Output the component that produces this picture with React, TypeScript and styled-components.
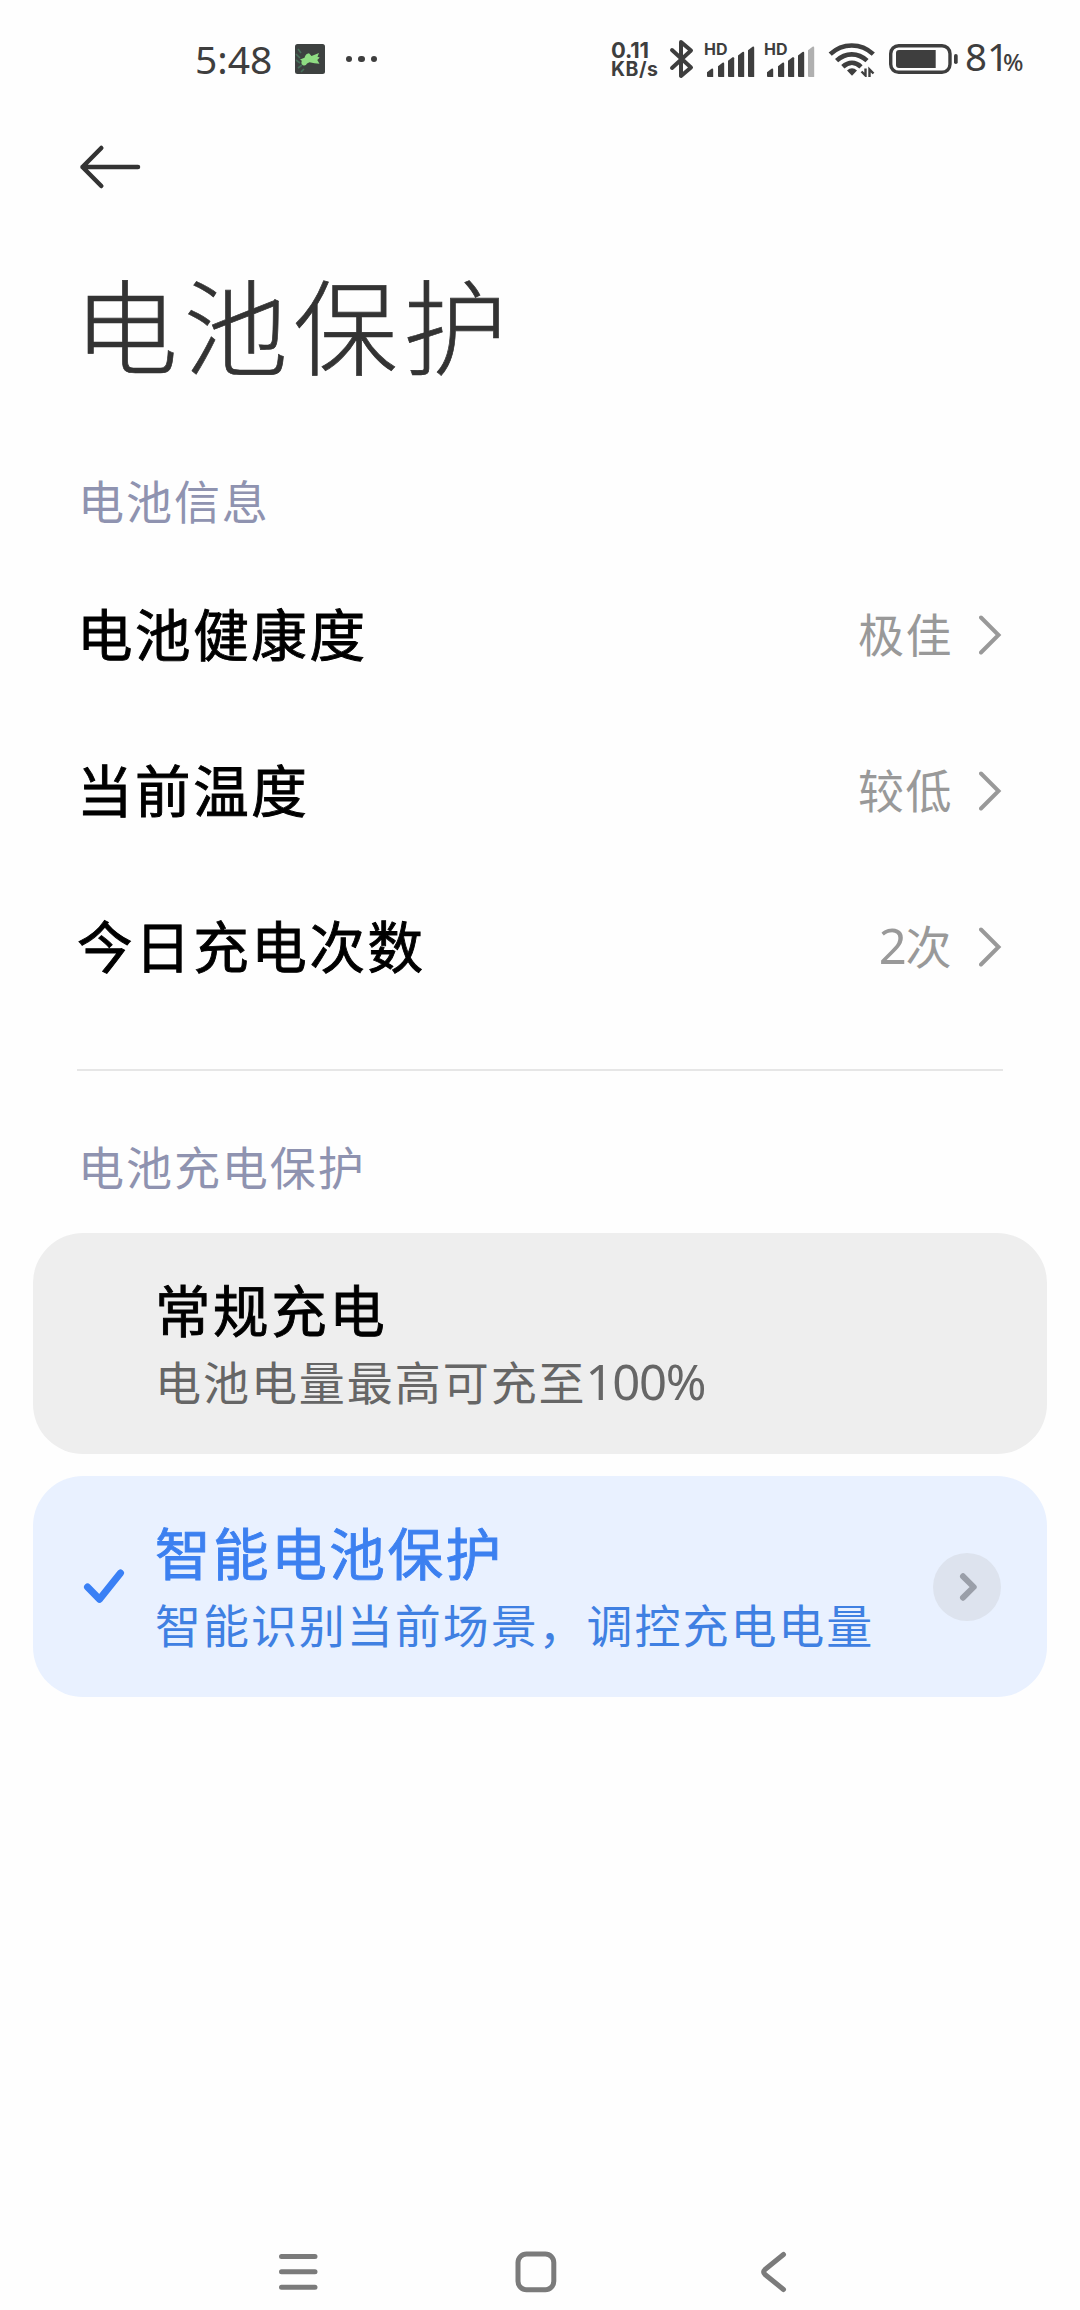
import React from 'react';
import styled, { createGlobalStyle } from 'styled-components';

const GlobalStyle = createGlobalStyle`
  * { box-sizing: border-box; }
  body { margin: 0; background: #fefefe; }
`;

const cjk = '"Noto Sans CJK SC", "Noto Sans", sans-serif';
const ink = '#3e3e3e';

const Screen = styled.div`
  display: flex;
  flex-direction: column;
  width: 1080px;
  height: 2310px;
  overflow: hidden;
  background: #fefefe;
  font-family: ${cjk};
`;

/* ---------- status bar ---------- */

const StatusBar = styled.header`
  display: flex;
  justify-content: space-between;
  align-items: center;
  height: 118px;
  padding: 0 54px 0 195px;
  color: ${ink};
  flex: none;
`;

const StatusGroup = styled.div`
  display: flex;
  align-items: center;
  height: 60px;
`;

const Clock = styled.span`
  width: 100px;
  padding-bottom: 1px;
  font: 400 39px/56px "Noto Sans", sans-serif;
`;

const Dots = styled.div`
  display: flex;
  gap: 6px;
  margin-left: 21px;
`;

const Dot = styled.i`
  width: 6.4px;
  height: 6.4px;
  border-radius: 50%;
  background: ${ink};
`;

const Speed = styled.div`
  display: flex;
  flex-direction: column;
  gap: 1px;
  width: 58px;
  padding-top: 1px;
  font-family: Inter, sans-serif;
  font-weight: 650;
  white-space: nowrap;
`;

const SpeedValue = styled.div`
  font-size: 22px;
  line-height: 17px;
  letter-spacing: -0.2px;
`;

const SpeedUnit = styled.div`
  font-size: 19.5px;
  line-height: 18px;
  letter-spacing: 0.5px;
`;

const Signals = styled.div`
  display: flex;
  gap: 10px;
  margin: 0 13px 0 10px;
`;

const Signal = styled.div`
  position: relative;
  display: flex;
  width: 50px;
  height: 34px;
`;

const SignalTag = styled.span`
  position: absolute;
  left: -1px;
  top: 0;
  font: 650 16px/14px Inter, sans-serif;
`;

const BatteryGauge = styled.div`
  display: flex;
  align-items: center;
  margin-left: 13px;
`;

const Percent = styled.div`
  display: flex;
  align-items: baseline;
  width: 61px;
  margin-left: 7px;
  font: 400 38.5px/56px "Noto Sans", sans-serif;
`;

const PercentSign = styled.span`
  font-size: 24px;
  font-weight: 500;
  margin-left: -6px;
`;

/* ---------- page ---------- */

const NavRow = styled.div`
  display: flex;
  align-items: center;
  height: 98px;
  padding-left: 78px;
`;

const Title = styled.h1`
  margin: 52px 0 88px 74px;
  font-size: 104px;
  font-weight: 300;
  line-height: 110px;
  letter-spacing: 5.7px;
  color: #333;
  -webkit-text-stroke: 0.7px #333;
`;

const SectionLabel = styled.h2`
  margin: 0 0 0 78px;
  font-size: 46px;
  font-weight: 400;
  line-height: 66px;
  letter-spacing: 1.95px;
  color: #8f93b0;
`;

const List = styled.div`
  margin: 25px 77px 0 77px;
`;

const Row = styled.div`
  display: flex;
  align-items: center;
  height: 156px;
`;

const RowName = styled.span`
  flex: 1;
  padding-bottom: 7px;
  font-size: 55.5px;
  font-weight: 400;
  line-height: 80px;
  letter-spacing: 2.6px;
  color: #000;
  -webkit-text-stroke: 0.9px #000;
`;

const RowValue = styled.span`
  padding-bottom: 7px;
  margin-right: 26px;
  font-size: 46px;
  line-height: 66px;
  letter-spacing: 1.5px;
  color: #999;
`;

const Digits = styled.span`
  font-family: "Noto Sans", sans-serif;
  font-size: 49px;
  line-height: 1;
  letter-spacing: -1.3px;
  margin-left: -1px;
`;

const Divider = styled.hr`
  width: 926px;
  height: 2px;
  margin: 44px 0 60.5px 77px;
  border: 0;
  background: #e6e6e6;
  flex: none;
`;

const Options = styled.div`
  display: flex;
  flex-direction: column;
  gap: 22px;
  margin: 35.5px 33px 0;
`;

const Option = styled.div<{ $active?: boolean }>`
  display: flex;
  align-items: center;
  height: 221px;
  padding-right: 46px;
  border-radius: 50px;
  background: ${(p) => (p.$active ? '#e9f1ff' : '#eeeeee')};
`;

const OptionMark = styled.div`
  width: 122px;
  padding: 3px 0 0 49px;
`;

const OptionBody = styled.div`
  flex: 1;
  padding-bottom: 2px;
  white-space: nowrap;
`;

const OptionName = styled.div<{ $active?: boolean }>`
  font-size: 55.5px;
  font-weight: 400;
  line-height: 70px;
  letter-spacing: 2.6px;
  color: ${(p) => (p.$active ? '#3c80f0' : '#000')};
  -webkit-text-stroke: 0.9px ${(p) => (p.$active ? '#3c80f0' : '#000')};
`;

const OptionNote = styled.div<{ $active?: boolean }>`
  margin-top: 4px;
  font-size: 46px;
  line-height: 66px;
  letter-spacing: 1.95px;
  color: ${(p) => (p.$active ? '#3f80e2' : '#666')};
`;

const DetailButton = styled.div`
  display: flex;
  align-items: center;
  justify-content: center;
  width: 68px;
  height: 68px;
  border-radius: 50%;
  background: #dde3ee;
`;

const SystemNav = styled.nav`
  display: flex;
  align-items: center;
  height: 76px;
  margin-top: auto;
  padding-left: 278px;
`;

const NavSlot = styled.div<{ $w: number }>`
  display: flex;
  width: ${(p) => p.$w}px;
`;

/* ---------- icons ---------- */

const AppBadge = () => (
  <svg width="30" height="30" viewBox="0 0 30 30">
    <rect width="30" height="30" rx="2.5" fill="#3d4140" />
    <path d="M1 10l4 4M1 16l4 3M3 24l4-3M6 28l3-3M3 5l3 4" stroke="#46705a" strokeWidth="1.6" />
    <path
      d="M5 15.500L9.500 13.800Q10.500 9.500 14 9.200L16.500 12 24 9 22.500 12.800 24.700 13.600 22.300 16 24.500 19.700 19.500 19.300 14.500 18.200 12 19.500Q11 22 8.500 21.500 5.500 20.500 6.800 16.800z"
      fill="#8fdc83"
    />
  </svg>
);

const Bluetooth = () => (
  <svg width="26" height="40" viewBox="0 0 26 40" fill="none" stroke={ink} strokeWidth="4" strokeLinecap="round" strokeLinejoin="round">
    <path d="M3 11L22 28.500 12 37V3l10 8.500L3 29" />
  </svg>
);

const bars = [
  { x: 2, y: 26.7 },
  { x: 13, y: 20.7 },
  { x: 23, y: 15.3 },
  { x: 33, y: 10 },
  { x: 43, y: 4.7 },
];

const SignalBars = ({ strength }: { strength: number }) => (
  <svg width="50" height="35" viewBox="0 0 50 35">
    {bars.map((b, i) => (
      <path
        key={b.x}
        d={`M${b.x} ${b.y + 3.5}L${b.x + 4.5} ${b.y}q1.700-.6 1.700 1V35H${b.x + 1}q-1 0-1-1z`}
        fill={i < strength ? ink : '#b0b0b0'}
      />
    ))}
  </svg>
);

const Wifi = () => (
  <svg width="48" height="36" viewBox="0 0 48 36" fill="none" stroke={ink} strokeWidth="4.6">
    <path d="M2.200 13.200C14.500 1.600 33 1.600 45.300 13.200" />
    <path d="M8.600 19.700C17.500 11.200 30 11.200 39 19.700" />
    <path d="M14.800 25.800C20.500 20.500 27.500 20.500 33 25.800" />
    <path d="M19 29.500q5-4.300 10 0L24 34.800z" fill={ink} stroke="none" />
    <path d="M37.500 27.500V34.500l-4-4M41.500 36V28.500l4 4" strokeWidth="2.400" />
  </svg>
);

const Battery = () => (
  <svg width="69" height="30" viewBox="0 0 69 30">
    <rect x="1.700" y="1.700" width="59.300" height="26.600" rx="8" fill="none" stroke={ink} strokeWidth="3.400" />
    <path d="M10 6h36.700v18H10q-3 0-3-3V9q0-3 3-3z" fill={ink} />
    <rect x="65" y="10" width="3.700" height="10" rx="1.800" fill={ink} />
  </svg>
);

const BackArrow = () => (
  <svg width="64" height="46" viewBox="0 0 64 46" fill="none" stroke="#333" strokeWidth="4.500" strokeLinecap="round" strokeLinejoin="round">
    <path d="M60 23H4.500M23.300 4L4.500 23l18.800 19" />
  </svg>
);

const RowChevron = () => (
  <svg width="24" height="40" viewBox="0 0 24 40" fill="none" stroke="#999" strokeWidth="4" strokeLinecap="round">
    <path d="M2 2.500L19.500 20 2 37.500" />
  </svg>
);

const Check = () => (
  <svg width="44" height="38" viewBox="0 0 44 38" fill="none" stroke="#3a80f5" strokeWidth="7" strokeLinecap="round" strokeLinejoin="round">
    <path d="M5.500 20L17.500 32.300 38.500 6" />
  </svg>
);

const DetailChevron = () => (
  <svg width="24" height="32" viewBox="0 0 24 32" fill="none" stroke="#9a9fa9" strokeWidth="6" strokeLinecap="round" strokeLinejoin="round">
    <path d="M8 5.300L18.700 16 8 26.700" />
  </svg>
);

const nav = { fill: 'none', stroke: '#7b7b7b', strokeWidth: 5, strokeLinecap: 'round' as const, strokeLinejoin: 'round' as const };

const MenuIcon = () => (
  <svg width="42" height="42" viewBox="0 0 42 42" {...nav}>
    <path d="M3.500 5.500H37M3.500 20.800H37M3.500 36.300H37" />
  </svg>
);

const HomeIcon = () => (
  <svg width="42" height="42" viewBox="0 0 42 42" {...nav}>
    <rect x="3" y="3" width="35.800" height="35.800" rx="8.500" />
  </svg>
);

const BackIcon = () => (
  <svg width="30" height="42" viewBox="0 0 30 42" {...nav}>
    <path d="M24.500 3.500L6 18.500Q3.500 21 6 23.500L24.500 38.500" />
  </svg>
);

export default function App() {
  return (
    <>
      <GlobalStyle />
      <Screen>
        <StatusBar>
          <StatusGroup>
            <Clock>5:48</Clock>
            <AppBadge />
            <Dots>
              <Dot />
              <Dot />
              <Dot />
            </Dots>
          </StatusGroup>
          <StatusGroup>
            <Speed>
              <SpeedValue>0.11</SpeedValue>
              <SpeedUnit>KB/s</SpeedUnit>
            </Speed>
            <Bluetooth />
            <Signals>
              <Signal>
                <SignalTag>HD</SignalTag>
                <SignalBars strength={5} />
              </Signal>
              <Signal>
                <SignalTag>HD</SignalTag>
                <SignalBars strength={4} />
              </Signal>
            </Signals>
            <Wifi />
            <BatteryGauge>
              <Battery />
            </BatteryGauge>
            <Percent>
              81<PercentSign>%</PercentSign>
            </Percent>
          </StatusGroup>
        </StatusBar>

        <NavRow>
          <BackArrow />
        </NavRow>
        <Title>电池保护</Title>

        <SectionLabel>电池信息</SectionLabel>
        <List>
          <Row>
            <RowName>电池健康度</RowName>
            <RowValue>极佳</RowValue>
            <RowChevron />
          </Row>
          <Row>
            <RowName>当前温度</RowName>
            <RowValue>较低</RowValue>
            <RowChevron />
          </Row>
          <Row>
            <RowName>今日充电次数</RowName>
            <RowValue>
              <Digits>2</Digits>次
            </RowValue>
            <RowChevron />
          </Row>
        </List>
        <Divider />

        <SectionLabel>电池充电保护</SectionLabel>
        <Options>
          <Option>
            <OptionMark />
            <OptionBody>
              <OptionName>常规充电</OptionName>
              <OptionNote>
                电池电量最高可充至<Digits>100%</Digits>
              </OptionNote>
            </OptionBody>
          </Option>
          <Option $active>
            <OptionMark>
              <Check />
            </OptionMark>
            <OptionBody>
              <OptionName $active>智能电池保护</OptionName>
              <OptionNote $active>智能识别当前场景，调控充电电量</OptionNote>
            </OptionBody>
            <DetailButton>
              <DetailChevron />
            </DetailButton>
          </Option>
        </Options>

        <SystemNav>
          <NavSlot $w={237}>
            <MenuIcon />
          </NavSlot>
          <NavSlot $w={244}>
            <HomeIcon />
          </NavSlot>
          <NavSlot $w={30}>
            <BackIcon />
          </NavSlot>
        </SystemNav>
      </Screen>
    </>
  );
}
